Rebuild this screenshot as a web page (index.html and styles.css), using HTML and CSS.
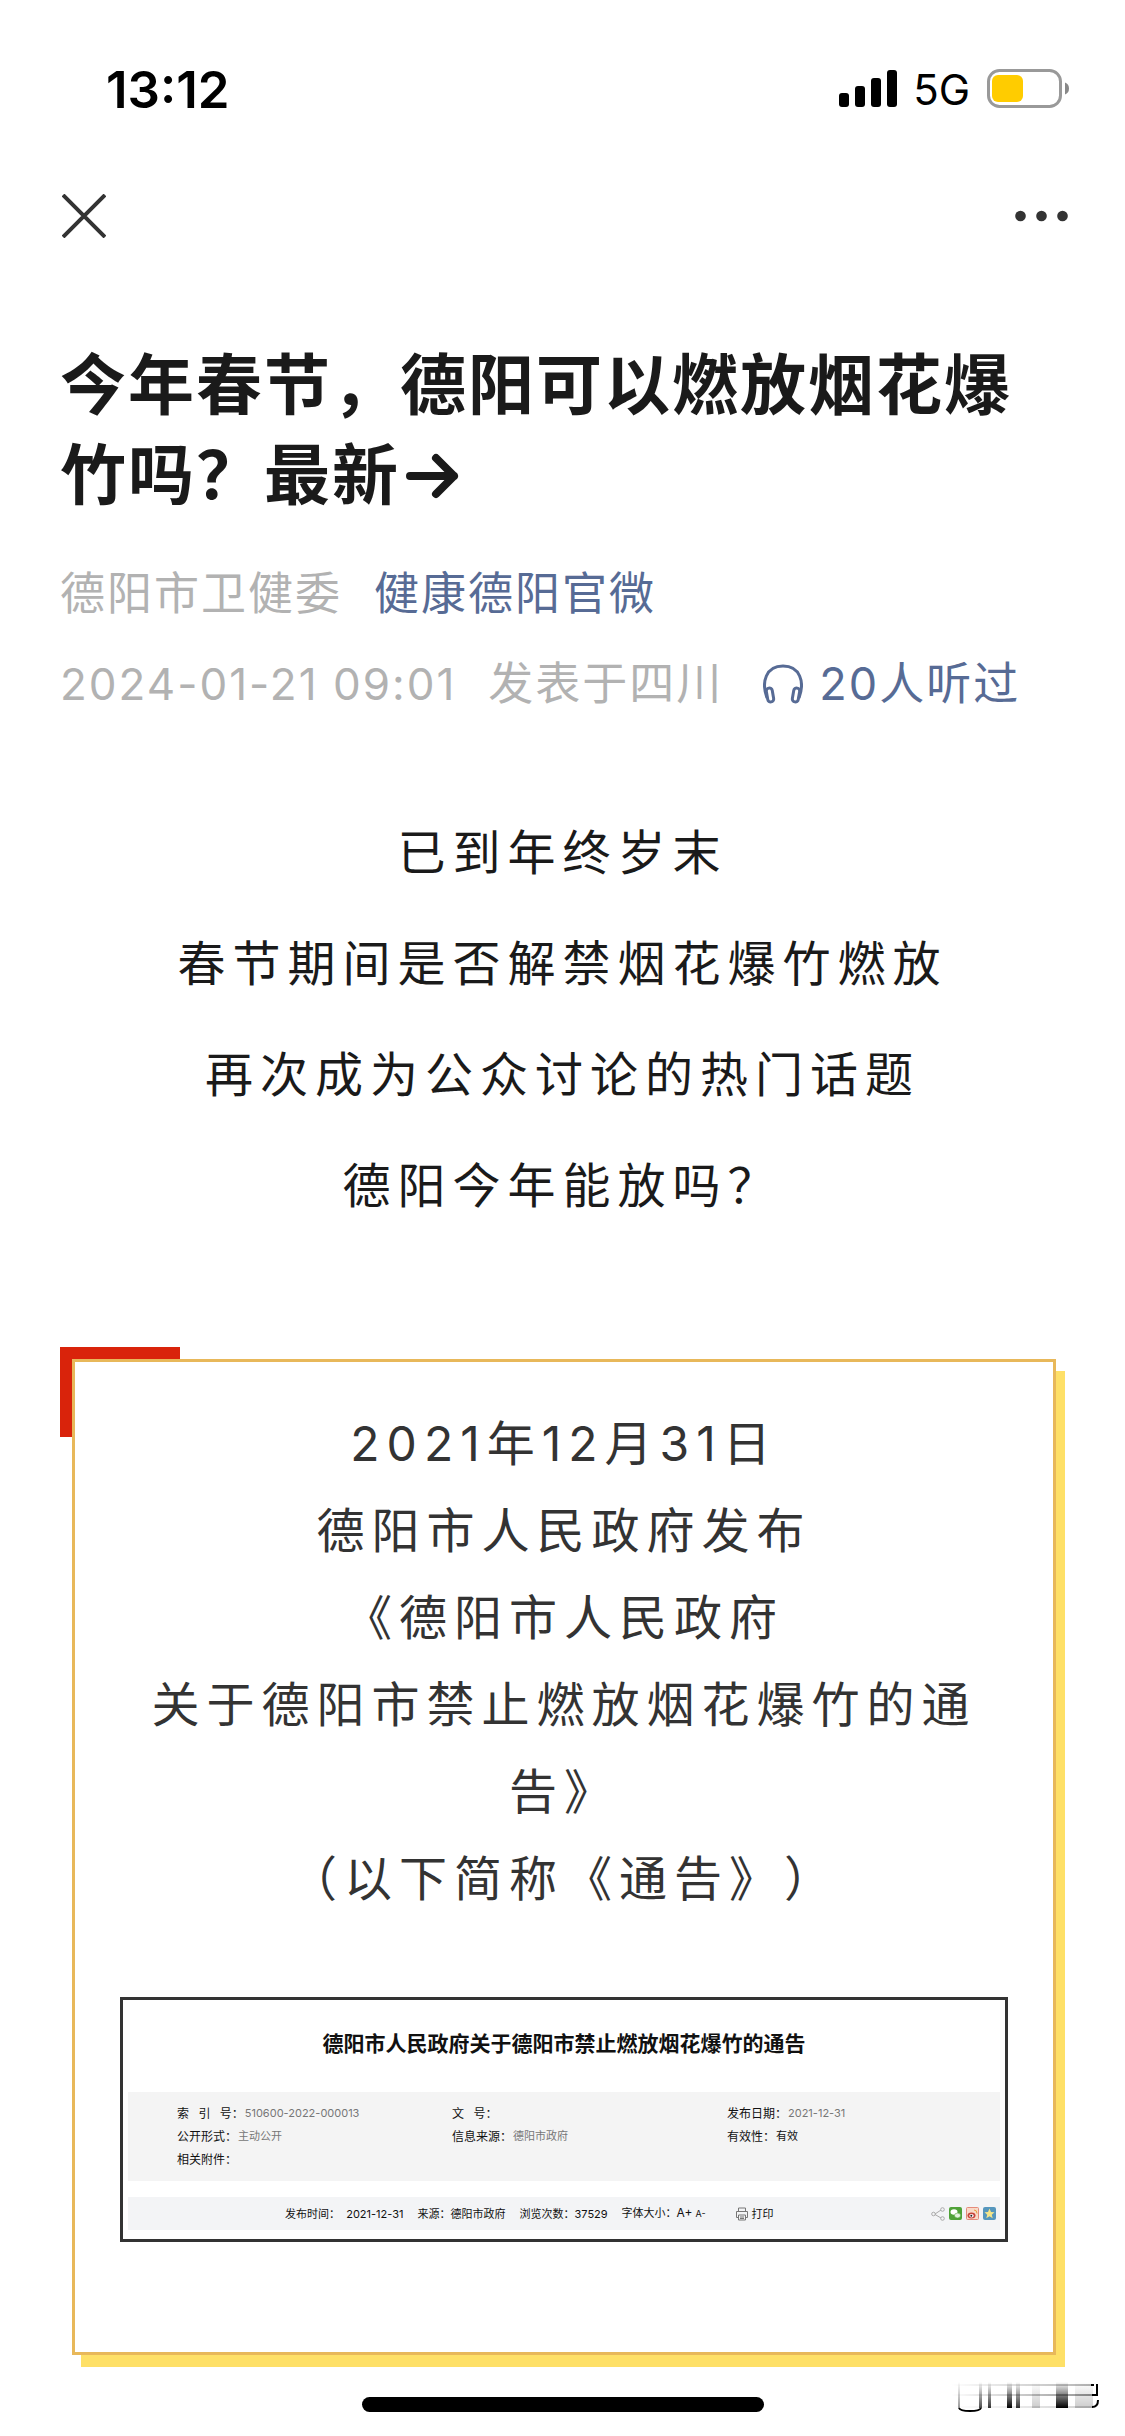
FILE: index.html
```html
<!DOCTYPE html>
<html lang="zh-CN">
<head>
  <meta charset="UTF-8" />
  <meta name="viewport" content="width=device-width, initial-scale=1" />
  <title>今年春节，德阳可以燃放烟花爆竹吗？最新→</title>
  <link rel="stylesheet" href="styles.css">
</head>
<body>
  <!-- 状态栏 -->
  <div class="status-bar">
    <span class="time">13:12</span>
    <div class="status-right">
      <svg class="signal" viewBox="0 0 58 38" width="58" height="38">
        <rect x="0" y="23" width="10" height="14" rx="3" />
        <rect x="16" y="16" width="10" height="21" rx="3" />
        <rect x="32" y="8" width="10" height="29" rx="3" />
        <rect x="48" y="0" width="10" height="37" rx="3" />
      </svg>
      <span class="network">5G</span>
      <svg class="battery" viewBox="0 0 82 40" width="82" height="40">
        <rect x="1.5" y="1.5" width="72" height="36" rx="11" fill="none" stroke="#999" stroke-width="3" />
        <rect x="5" y="6" width="31" height="27" rx="6" fill="#ffcc00" />
        <path d="M78 13.500q4 1.500 4 6.000t-4 6.000z" fill="#888" />
      </svg>
    </div>
  </div>

  <!-- 导航 -->
  <nav class="nav">
    <button class="icon-btn" aria-label="关闭">
      <svg viewBox="0 0 44 44" width="44" height="44"><path d="M1 1L43 43M43 1L1 43" stroke="#333" stroke-width="4" /></svg>
    </button>
    <button class="icon-btn" aria-label="更多">
      <svg viewBox="0 0 53 44" width="53" height="44" fill="#333">
        <circle cx="5.500" cy="22" r="5.300" /><circle cx="26.500" cy="22" r="5.300" /><circle cx="47.500" cy="22" r="5.300" />
      </svg>
    </button>
  </nav>

  <article class="article">
    <h1>今年春节，德阳可以燃放烟花爆竹吗？最新<svg class="arrow" viewBox="0 0 54 46" width="54" height="46"><path d="M4 23H48M30 5L48 23L30 41" /></svg></h1>

    <div class="meta">
      <span>德阳市卫健委</span>
      <a href="#">健康德阳官微</a>
    </div>
    <div class="meta meta-date">
      <time>2024-01-21 09:01</time>
      <span>发表于四川</span>
      <a class="listen" href="#">
        <svg viewBox="0 0 40 40" width="40" height="40"><path d="M4 34C-2 18 3 2 20 2S42 18 36 34" /><rect x="4" y="24" width="6" height="14" rx="3" transform="rotate(-10 7 31)" /><rect x="30" y="24" width="6" height="14" rx="3" transform="rotate(10 33 31)" /></svg>
        20人听过
      </a>
    </div>

    <div class="intro">
      <p>已到年终岁末</p>
      <p>春节期间是否解禁烟花爆竹燃放</p>
      <p>再次成为公众讨论的热门话题</p>
      <p>德阳今年能放吗？</p>
    </div>

    <!-- 通告 -->
    <section class="card">
      <div class="card-inner">
        <p>2021年12月31日</p>
        <p>德阳市人民政府发布</p>
        <p>《德阳市人民政府</p>
        <p>关于德阳市禁止燃放烟花爆竹的通告》</p>
        <p>（以下简称《通告》）</p>

        <div class="notice">
          <h2>德阳市人民政府关于德阳市禁止燃放烟花爆竹的通告</h2>
          <dl class="info">
            <div><dt class="wide">索 引 号：</dt><dd>510600-2022-000013</dd></div>
            <div><dt class="wide">文 号：</dt><dd></dd></div>
            <div><dt>发布日期：</dt><dd>2021-12-31</dd></div>
            <div><dt>公开形式：</dt><dd>主动公开</dd></div>
            <div><dt>信息来源：</dt><dd>德阳市政府</dd></div>
            <div><dt>有效性：</dt><dd class="valid">有效</dd></div>
            <div><dt>相关附件：</dt><dd></dd></div>
          </dl>
          <div class="toolbar">
            <div class="tools">
              <span>发布时间：&nbsp; 2021-12-31</span>
              <span>来源：德阳市政府</span>
              <span>浏览次数：37529</span>
              <span>字体大小：<a class="bigger" href="#">A+</a> <a class="smaller" href="#">A-</a></span>
              <a class="print" href="#">
                <svg viewBox="0 0 14 14" width="14" height="14" fill="none" stroke="#777"><path d="M3.500 4V1h7v3M3 10.500H1.500V4.500h11v6H11" /><path d="M3.500 8h7v5h-7zM5 10h4M5 11.500h4" /></svg>
                打印
              </a>
            </div>
            <div class="share">
              <a href="#" aria-label="分享"><svg viewBox="0 0 14 14" width="14" height="14" fill="none" stroke="#aaa"><path d="M4 7L10 3M4 7.500L10 11" /><circle cx="2.500" cy="7" r="1.800" /><circle cx="11.500" cy="2.500" r="1.800" /><circle cx="11.500" cy="11.500" r="1.800" /></svg></a>
              <a href="#" aria-label="微信"><svg viewBox="0 0 13 13" width="13" height="13"><rect width="13" height="13" rx="2" fill="#4fa238" /><ellipse cx="5" cy="5" rx="3.500" ry="2.800" fill="#fff" /><ellipse cx="8.500" cy="8.500" rx="3" ry="2.400" fill="#e4f3df" stroke="#4fa238" stroke-width=".5" /></svg></a>
              <a href="#" aria-label="微博"><svg viewBox="0 0 13 13" width="13" height="13"><rect x=".5" y=".5" width="12" height="12" rx="1" fill="#f9d9c8" stroke="#e58b7b" /><ellipse cx="5.500" cy="8.500" rx="4" ry="3" fill="#c8443b" /><ellipse cx="5.500" cy="8.700" rx="2.200" ry="1.700" fill="#fff" /><circle cx="5.300" cy="8.700" r="1" fill="#222" /><path d="M8 3q3 0 3 3.500" fill="none" stroke="#e8a03c" /></svg></a>
              <a href="#" aria-label="QQ空间"><svg viewBox="0 0 13 13" width="13" height="13"><rect width="13" height="13" rx="2" fill="#5596bd" /><path d="M6.500 1.500L8 5l3.500.3-2.700 2.400.9 3.600-3.200-2-3.200 2 .9-3.600L1.500 5.300 5 5z" fill="#f4e58a" /></svg></a>
            </div>
          </div>
        </div>
      </div>
    </section>
  </article>

  <footer class="bottom">
    <div class="home-indicator"></div>
    <svg class="smear" viewBox="0 0 212 36" width="212" height="36">
      <defs>
        <linearGradient id="down" x1="0" y1="0" x2="0" y2="1"><stop offset="0" stop-color="#000" stop-opacity="0" /><stop offset="1" stop-color="#000" /></linearGradient>
        <linearGradient id="right" x1="0" y1="0" x2="1" y2="0"><stop offset=".3" stop-color="#000" stop-opacity="0" /><stop offset="1" stop-color="#000" stop-opacity=".6" /></linearGradient>
      </defs>
      <g fill="url(#down)">
        <rect x="70" y="3" width="2" height="26" opacity=".4" />
        <rect x="91" y="3" width="3" height="26" opacity=".7" />
        <rect x="100" y="3" width="3" height="26" opacity=".8" />
        <rect x="119" y="3" width="5" height="26" />
        <rect x="128" y="3" width="4" height="26" opacity=".8" />
        <rect x="144" y="3" width="8" height="26" opacity=".2" />
        <rect x="168" y="3" width="12" height="26" />
        <rect x="187" y="3" width="18" height="26" opacity=".2" />
      </g>
      <g fill="url(#right)">
        <rect x="2" y="5" width="203" height="2" opacity=".5" />
        <rect x="2" y="15" width="203" height="2" opacity=".7" />
        <rect x="2" y="27" width="203" height="2" opacity=".3" />
      </g>
      <path d="M71 29Q72 32 82 32T93 29M203 6h3M209 5V16H204M210 21Q210 28 204 28" fill="none" stroke="#000" stroke-width="2" />
    </svg>
  </footer>
</body>
</html>
```
FILE: styles.css
```css
* {
  box-sizing: border-box;
}

body {
  margin: 0;
  background-color: #ffffff;
  color: #1a1a1a;
  font-family: Inter, "Noto Sans CJK SC", sans-serif;
  text-spacing-trim: space-all;
}

h1,
h2,
p,
dl,
dd {
  margin: 0;
}

a {
  color: #576b95;
  text-decoration: none;
}

svg {
  display: block;
}

/* 状态栏 */
.status-bar {
  display: flex;
  justify-content: space-between;
  align-items: center;
  height: 178px;
  padding: 0 56px 0 106px;
  color: #000000;
}

.time {
  font-size: 51px;
  font-weight: 600;
}

.status-right {
  display: flex;
  align-items: center;
}

.network {
  margin: 0 17px 0 16px;
  font-size: 42px;
}

/* 导航 */
.nav {
  display: flex;
  justify-content: space-between;
  align-items: center;
  height: 76px;
  padding: 0 57px 0 62px;
}

.icon-btn {
  padding: 0;
  border: 0;
  background: none;
  cursor: pointer;
}

/* 正文 */
.article {
  padding: 86px 60px 0;
}

h1 {
  font-size: 66px;
  font-weight: 600;
  line-height: 90px;
  letter-spacing: 2px;
}

.arrow {
  display: inline-block;
  margin-left: 6px;
  fill: none;
  stroke: #1a1a1a;
  stroke-width: 8;
  stroke-linecap: round;
  stroke-linejoin: round;
}

.meta {
  display: flex;
  gap: 32px;
  margin-top: 29px;
  font-size: 45px;
  line-height: 90px;
  letter-spacing: 2px;
  color: #b2b2b2;
}

.meta-date {
  margin-top: 0;
}

.meta time {
  font-size: 44px;
}

.listen {
  display: flex;
  align-items: center;
  gap: 16px;
  margin-left: 8px;
}

.listen svg {
  fill: none;
  stroke: #576b95;
  stroke-width: 3;
}

.intro {
  margin-top: 68px;
  font-size: 48px;
  line-height: 111px;
  letter-spacing: 7px;
  text-align: center;
}

/* 通告卡片，左上角红色角标 */
.card {
  margin-top: 106px;
  padding: 12px 9px 0 12px;
  background: linear-gradient(#d9230b, #d9230b) no-repeat 0 0 / 120px 90px;
}

.card-inner {
  padding: 38px 45px 110px;
  border: 3px solid #e8b85a;
  background-color: #ffffff;
  box-shadow: 9px 12px 0 #fee067;
  color: #333333;
  font-size: 48px;
  line-height: 87px;
  letter-spacing: 7px;
  text-align: center;
}

.notice {
  margin-top: 75px;
  padding: 0 5px 9px;
  border: 3px solid #333333;
  color: #111111;
  letter-spacing: 0;
  text-align: left;
}

.notice h2 {
  padding: 28px 0 32px;
  font-size: 21px;
  line-height: 32px;
  text-align: center;
}

.info {
  display: grid;
  grid-template-columns: repeat(3, 275px);
  padding: 10px 0 10px 49px;
  background-color: #f4f4f4;
  font-size: 12px;
  line-height: 23px;
}

.info div {
  display: flex;
  gap: 1px;
}

.info .wide {
  word-spacing: 6px;
}

.info dd {
  color: #777777;
  font-size: 11px;
}

.info .valid {
  color: #111111;
}

.toolbar {
  display: flex;
  justify-content: space-between;
  align-items: center;
  margin-top: 16px;
  padding: 0 4px 0 157px;
  background-color: #f3f4f6;
  font-size: 11px;
  line-height: 32px;
}

.toolbar a {
  color: #111111;
}

.tools,
.share,
.print {
  display: flex;
  align-items: center;
}

.tools {
  gap: 14px;
}

.bigger {
  font-size: 12px;
}

.smaller {
  font-size: 9px;
}

.print {
  gap: 3px;
  margin-left: 15px;
}

.share {
  gap: 4px;
}

/* 底部横条 */
.bottom {
  position: relative;
  padding: 42px 0 24px;
}

.home-indicator {
  width: 402px;
  height: 15px;
  margin: 0 auto;
  border-radius: 8px;
  background-color: #000000;
}

.smear {
  position: absolute;
  right: 25px;
  bottom: 21px;
}
```
